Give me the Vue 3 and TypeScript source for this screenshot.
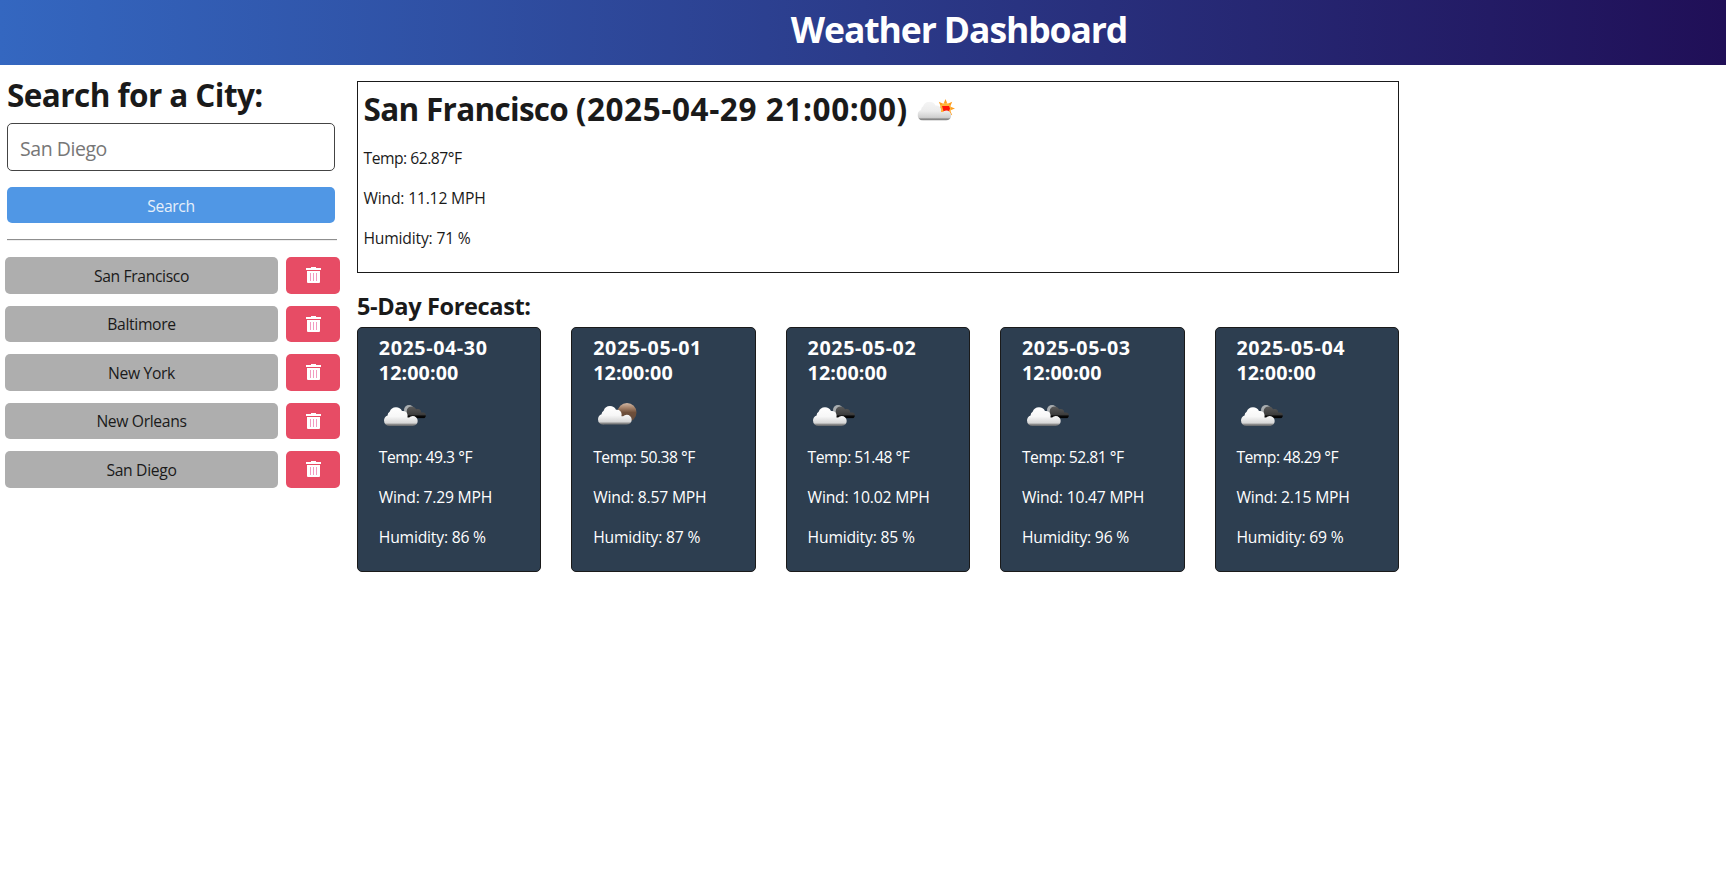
<script setup lang="ts">
import { ref } from 'vue'

type Sky = 'broken' | 'scattered'

interface Forecast {
  date: string
  time: string
  sky: Sky
  temp: string
  wind: string
  humidity: string
}

const query = ref('')

const history = ref<string[]>(['San Francisco', 'Baltimore', 'New York', 'New Orleans', 'San Diego'])

const forecast: Forecast[] = [
  { date: '2025-04-30', time: '12:00:00', sky: 'broken', temp: '49.3', wind: '7.29', humidity: '86' },
  { date: '2025-05-01', time: '12:00:00', sky: 'scattered', temp: '50.38', wind: '8.57', humidity: '87' },
  { date: '2025-05-02', time: '12:00:00', sky: 'broken', temp: '51.48', wind: '10.02', humidity: '85' },
  { date: '2025-05-03', time: '12:00:00', sky: 'broken', temp: '52.81', wind: '10.47', humidity: '96' },
  { date: '2025-05-04', time: '12:00:00', sky: 'broken', temp: '48.29', wind: '2.15', humidity: '69' },
]

// Angles of the sun's rays, in degrees
const rays = [0, 45, 90, 135, 180, 225, 270, 315]

function search() {
  const city = query.value.trim()
  if (city && !history.value.includes(city)) history.value.push(city)
  query.value = ''
}

function remove(city: string) {
  history.value = history.value.filter((c) => c !== city)
}
</script>

<template>
  <div class="page">
    <svg class="defs" aria-hidden="true">
      <defs>
        <linearGradient id="cloudFill" x1="0" y1="0" x2="0" y2="1">
          <stop offset="0" stop-color="#ffffff" />
          <stop offset="0.5" stop-color="#f7f7f7" />
          <stop offset="0.84" stop-color="#d6d6d6" />
          <stop offset="0.92" stop-color="#8a8a8a" />
          <stop offset="1" stop-color="#606468" />
        </linearGradient>
        <linearGradient id="softCloudFill" x1="0" y1="0" x2="0" y2="1">
          <stop offset="0" stop-color="#f5f5f5" />
          <stop offset="0.5" stop-color="#ececec" />
          <stop offset="0.84" stop-color="#cfcfcf" />
          <stop offset="0.92" stop-color="#8a8a8a" />
          <stop offset="1" stop-color="#808080" />
        </linearGradient>
        <linearGradient id="darkCloudFill" x1="0" y1="0" x2="0" y2="1">
          <stop offset="0" stop-color="#5c5c5c" />
          <stop offset="0.7" stop-color="#3c3c3c" />
          <stop offset="0.8" stop-color="#0a0a0a" />
          <stop offset="1" stop-color="#000000" />
        </linearGradient>
        <linearGradient id="moonFill" x1="0" y1="0" x2="0" y2="1">
          <stop offset="0" stop-color="#d2b9a6" />
          <stop offset="0.25" stop-color="#a5826a" />
          <stop offset="0.5" stop-color="#6f4f3a" />
          <stop offset="1" stop-color="#5f4a3c" />
        </linearGradient>
        <clipPath id="cloudShape">
          <circle cx="10.500" cy="30.600" r="5.500" />
          <circle cx="12.500" cy="25.300" r="3.900" />
          <circle cx="17" cy="24" r="6.700" />
          <circle cx="24" cy="25.500" r="4.600" />
          <circle cx="33.700" cy="31" r="5" />
          <rect x="10.500" y="26" width="18" height="10" />
          <rect x="26" y="27.500" width="7.700" height="8.500" />
        </clipPath>
        <clipPath id="darkShape">
          <circle cx="32.600" cy="21.300" r="4.900" />
          <circle cx="38.600" cy="22.600" r="3.600" />
          <circle cx="44" cy="25.400" r="2.800" />
          <rect x="28" y="22.600" width="16" height="5.600" />
        </clipPath>
      </defs>
    </svg>

    <header class="banner">
      <h1>Weather Dashboard</h1>
    </header>

    <div class="layout">
      <aside class="sidebar">
        <form class="search" @submit.prevent="search">
          <h2>Search for a City:</h2>
          <input v-model="query" type="text" placeholder="San Diego" />
          <button type="submit">Search</button>
        </form>
        <hr />
        <div class="history">
          <div v-for="city in history" :key="city" class="entry">
            <button class="city" type="button">{{ city }}</button>
            <button class="trash" type="button" :aria-label="`Remove ${city}`" @click="remove(city)">
              <svg width="15" height="17" viewBox="0 0 15 17">
                <path d="M4 1h1V0h5v1h5v2H0V1z" fill="#fff" />
                <path d="M1 4h13v11a1 1 0 0 1-1 1H2a1 1 0 0 1-1-1z" fill="#fff" />
                <path d="M4.500 6v8M7.500 6v8M10.500 6v8" stroke="#f29ac0" stroke-width="1" />
              </svg>
            </button>
          </div>
        </div>
      </aside>

      <main class="content">
        <section class="today">
          <h2>
            <span class="place">San Francisco </span>
            <span class="stamp">(2025-04-29 21:00:00)</span>
            <svg class="today-icon" width="40" height="24" viewBox="0 0 40 24">
              <g transform="translate(28.500 10.500)">
                <path
                  v-for="a in rays"
                  :key="a"
                  d="M-1.800-5 0-9.500 1.800-5z"
                  fill="#ff9d1e"
                  :transform="`rotate(${a})`"
                />
                <circle r="5.600" fill="#ffb43a" />
                <path d="M-3.500-2.500h7l1 2.500-1.500 3.500-4.500 1z" fill="#ff1607" />
              </g>
              <g transform="translate(-4.500 -13.500)">
                <g clip-path="url(#cloudShape)">
                  <rect x="4" y="17" width="36" height="19" fill="url(#softCloudFill)" />
                </g>
              </g>
            </svg>
          </h2>
          <p class="temp">Temp: 62.87°F</p>
          <p class="wind">Wind: 11.12 MPH</p>
          <p class="humidity">Humidity: 71 %</p>
        </section>

        <h3 class="forecast-title">5-Day Forecast:</h3>
        <section class="cards">
          <article v-for="day in forecast" :key="day.date" class="card">
            <h4>
              <span class="date">{{ day.date }}</span>
              <span class="time">{{ day.time }}</span>
            </h4>
            <svg v-if="day.sky === 'broken'" width="50" height="50" viewBox="0 0 50 50">
              <circle cx="30" cy="20" r="5" fill="#a9adb0" />
              <g clip-path="url(#darkShape)">
                <rect x="27" y="16" width="20" height="12.500" fill="url(#darkCloudFill)" />
              </g>
              <g clip-path="url(#cloudShape)">
                <rect x="4" y="17" width="36" height="19" fill="url(#cloudFill)" />
              </g>
            </svg>
            <svg v-else width="50" height="50" viewBox="0 0 50 50">
              <circle cx="34" cy="22.500" r="9.500" fill="url(#moonFill)" />
              <g transform="translate(0 -1.200)">
                <g clip-path="url(#cloudShape)">
                  <rect x="4" y="17" width="36" height="19" fill="url(#cloudFill)" />
                </g>
              </g>
            </svg>
            <p class="temp">Temp: {{ day.temp }} °F</p>
            <p class="wind">Wind: {{ day.wind }} MPH</p>
            <p class="humidity">Humidity: {{ day.humidity }} %</p>
          </article>
        </section>
      </main>
    </div>
  </div>
</template>

<style>
body {
  background: #fff;
}
</style>

<style scoped>
* {
  box-sizing: border-box;
}

.page {
  min-height: 892px;
  font-family: 'Open Sans', 'Noto Sans', sans-serif;
  font-size: 15.7px;
  line-height: 24px;
  color: #1a1a1a;
}

h1,
h2,
h3,
h4,
p {
  margin: 0;
}

button,
input {
  font-family: inherit;
}

.defs {
  display: block;
  width: 0;
  height: 0;
}

.banner {
  height: 65px;
  padding: 9px 0 0 192px;
  background: linear-gradient(to right, #3467c0 0%, #2b3b8a 50%, #200f57 100%);
  color: #fff;
  text-align: center;
}

.banner h1 {
  font-size: 35.5px;
  line-height: 41px;
  letter-spacing: -1.1px;
}

.layout {
  display: flex;
  align-items: flex-start;
}

.sidebar {
  width: 357px;
  padding: 10px 0 0 5px;
}

.search {
  display: flex;
  flex-direction: column;
  width: 328px;
  margin-left: 2px;
}

.search h2 {
  font-size: 31.5px;
  line-height: 40px;
  letter-spacing: -0.57px;
}

.search input {
  height: 48px;
  margin-top: 8px;
  padding: 2px 12px 0;
  border: 1px solid #444;
  border-radius: 5px;
  background: #fff;
  color: #1a1a1a;
  font-size: 19.5px;
  letter-spacing: -0.45px;
}

.search input::placeholder {
  color: #777;
  opacity: 1;
}

.search button {
  height: 36px;
  margin-top: 16px;
  padding: 1px 0 0;
  border: 0;
  border-radius: 5px;
  background: #5097e5;
  color: #e6effa;
  font-size: 15.7px;
  letter-spacing: -0.35px;
}

hr {
  width: 330px;
  height: 2px;
  margin: 16px 0 16px 2px;
  border: 0;
  border-top: 1px solid #8f8f8f;
  border-bottom: 1px solid #eee;
}

.history {
  display: flex;
  flex-direction: column;
  gap: 12px;
}

.entry {
  display: flex;
  gap: 8px;
  height: 36.5px;
}

.entry button {
  padding: 1px 0 0;
  border: 0;
  border-radius: 5px;
}

.city {
  width: 273px;
  background: #aeaeae;
  color: #1a1a1a;
  font-size: 15.7px;
  letter-spacing: -0.35px;
}

.trash {
  display: flex;
  align-items: center;
  justify-content: center;
  width: 54px;
  background: #e74c65;
}

.content {
  width: 1042px;
  padding-top: 16px;
}

.today {
  height: 192px;
  padding: 7px 5.5px 0;
  border: 1px solid #1a1a1a;
}

.today h2 {
  display: flex;
  align-items: center;
  font-size: 31.5px;
  line-height: 40px;
  white-space: pre;
}

.place {
  letter-spacing: -0.7px;
}

.stamp {
  letter-spacing: 0.58px;
}

.today-icon {
  margin: 1px 0 0 9px;
}

.today .temp {
  margin-top: 17px;
}

.temp {
  letter-spacing: -0.5px;
}

.wind {
  margin-top: 16px;
  letter-spacing: -0.2px;
}

.humidity {
  margin-top: 16px;
  letter-spacing: -0.2px;
}

.forecast-title {
  margin-top: 18px;
  font-size: 23.6px;
  line-height: 30px;
  letter-spacing: -0.4px;
}

.cards {
  display: grid;
  grid-template-columns: repeat(5, 1fr);
  gap: 30px;
  margin-top: 6px;
}

.card {
  height: 245px;
  padding: 7px 20.8px 0;
  border: 1px solid #1a1a1a;
  border-radius: 5px;
  background: #2d3e50;
  color: #fff;
}

.card h4 {
  display: flex;
  flex-direction: column;
  font-size: 19.7px;
  line-height: 25px;
}

.date {
  letter-spacing: 0.6px;
}

.time {
  letter-spacing: 0.1px;
}

.card svg {
  display: block;
  margin: 5px 0;
}
</style>
